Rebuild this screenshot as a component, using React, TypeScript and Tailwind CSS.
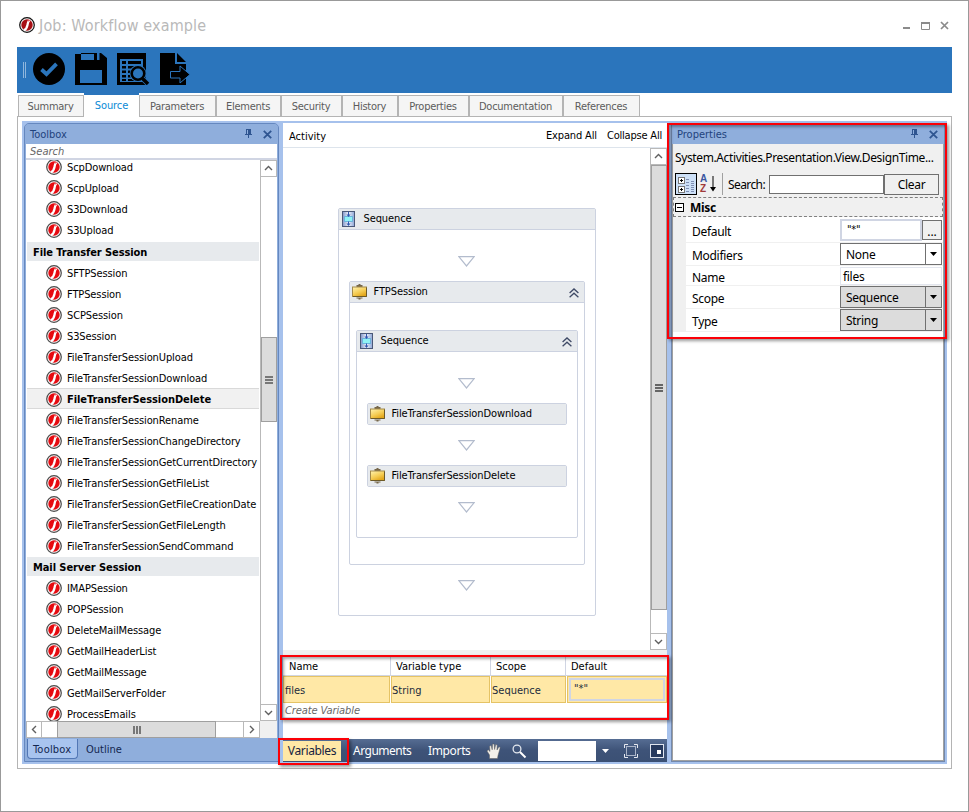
import type { ReactNode } from 'react';

type ToolRow = { label: string; kind?: 'group' | 'selected'; spaced?: boolean };

const toolRows: ToolRow[] = [
  { label: 'ScpDownload' },
  { label: 'ScpUpload' },
  { label: 'S3Download' },
  { label: 'S3Upload' },
  { label: 'File Transfer Session', kind: 'group', spaced: true },
  { label: 'SFTPSession' },
  { label: 'FTPSession' },
  { label: 'SCPSession' },
  { label: 'S3Session' },
  { label: 'FileTransferSessionUpload' },
  { label: 'FileTransferSessionDownload' },
  { label: 'FileTransferSessionDelete', kind: 'selected' },
  { label: 'FileTransferSessionRename' },
  { label: 'FileTransferSessionChangeDirectory' },
  { label: 'FileTransferSessionGetCurrentDirectory' },
  { label: 'FileTransferSessionGetFileList' },
  { label: 'FileTransferSessionGetFileCreationDate' },
  { label: 'FileTransferSessionGetFileLength' },
  { label: 'FileTransferSessionSendCommand' },
  { label: 'Mail Server Session', kind: 'group' },
  { label: 'IMAPSession' },
  { label: 'POPSession' },
  { label: 'DeleteMailMessage' },
  { label: 'GetMailHeaderList' },
  { label: 'GetMailMessage' },
  { label: 'GetMailServerFolder' },
  { label: 'ProcessEmails' },
];

const tabs = [
  { label: 'Summary', width: 'w-[66px]' },
  { label: 'Source', width: 'w-[55px]', active: true },
  { label: 'Parameters', width: 'w-[77px]' },
  { label: 'Elements', width: 'w-[65px]' },
  { label: 'Security', width: 'w-[61px]' },
  { label: 'History', width: 'w-[56px]' },
  { label: 'Properties', width: 'w-[71px]' },
  { label: 'Documentation', width: 'w-[94px]' },
  { label: 'References', width: 'w-[77px]' },
];

function Logo({ dark = false }: { dark?: boolean }) {
  return (
    <svg width="16" height="16" viewBox="0 0 16 16" className="shrink-0">
      <circle cx="8" cy="8" r="7.3" fill="#f4f4f4" stroke={dark ? '#111' : '#4a4a4a'} strokeWidth="1.2" />
      <circle cx="8" cy="8" r="5.7" fill={dark ? '#a80f14' : '#e60a10'} />
      <path d="M10.8 3.4 C8.6 4.2 9 5.8 8.5 8 C8 10.400 7.300 12.400 5 13.200" fill="none" stroke="#fff" strokeWidth="2.300" />
      <path d="M9 2.600 L11.200 2.900 L10.600 4.200 L8.800 4.400z" fill="#ec5a5e" />
    </svg>
  );
}

function PinIcon() {
  return (
    <svg width="7" height="10" viewBox="0 0 7 10" shapeRendering="crispEdges">
      <path d="M1 0h5v5h1v1H4v3H3V6H0V5h1z" fill="#2f5591" />
      <rect x="2" y="1" width="1" height="4" fill="#8faedc" />
    </svg>
  );
}

function CloseIcon({ color = '#2f5591' }: { color?: string }) {
  return (
    <svg width="9" height="9" viewBox="0 0 9 9">
      <path d="M0.8 0.8 L8.2 8.2 M8.2 0.8 L0.8 8.2" stroke={color} strokeWidth="1.8" />
    </svg>
  );
}

function Chevron({ dir }: { dir: 'up' | 'down' | 'left' | 'right' }) {
  const paths = {
    up: 'M1 6 L4.5 2.5 L8 6',
    down: 'M1 3 L4.5 6.5 L8 3',
    left: 'M6 1 L2.5 4.5 L6 8',
    right: 'M3 1 L6.5 4.5 L3 8',
  };
  return (
    <svg width="9" height="9" viewBox="0 0 9 9">
      <path d={paths[dir]} fill="none" stroke="#606060" strokeWidth="1.4" />
    </svg>
  );
}

function PanelHeader({ title }: { title: string }) {
  return (
    <div className="flex h-[20px] shrink-0 items-center bg-[#8faedc] pr-[6px] pl-[5px] text-[#1f437c]">
      <span className="flex-1 pt-px">{title}</span>
      <PinIcon />
      <span className="ml-[11px]">
        <CloseIcon />
      </span>
    </div>
  );
}

function SequenceIcon() {
  return (
    <svg width="13" height="16" viewBox="0 0 13 16">
      <defs>
        <linearGradient id="seq" x1="0" y1="0" x2="1" y2="0">
          <stop offset="0" stopColor="#7f93c6" />
          <stop offset="0.5" stopColor="#eef3fc" />
          <stop offset="1" stopColor="#8ba3d4" />
        </linearGradient>
      </defs>
      <rect x="0.5" y="0.5" width="12" height="15" fill="url(#seq)" stroke="#4a5878" />
      <rect x="2.500" y="5.500" width="8" height="5" fill="#8ff2f4" stroke="#6cb4dc" />
      <path d="M6.5 1v4M6.5 10.5v3" stroke="#2f55ad" />
      <path d="M4.500 3.500h4L6.500 6z M4.500 12.500h4L6.500 15z" fill="#2f55ad" />
    </svg>
  );
}

function ActivityIcon() {
  return (
    <svg width="16" height="16" viewBox="0 0 16 16">
      <defs>
        <linearGradient id="act" x1="0" y1="0" x2="0.6" y2="1">
          <stop offset="0" stopColor="#fff3b0" />
          <stop offset="0.6" stopColor="#f5cd55" />
          <stop offset="1" stopColor="#e3a71c" />
        </linearGradient>
      </defs>
      <path d="M6.500 0h2v1h2v2h-6V1h2z M4.500 13.500h6v1h-2v1h-2v-1h-2z" fill="#75664a" />
      <rect x="0.500" y="3" width="14" height="9.500" fill="url(#act)" stroke="#a3894a" />
      <path d="M1 12.500h13.500V3.500" fill="none" stroke="#6d5a28" />
    </svg>
  );
}

function FlowArrow() {
  return (
    <svg width="17" height="11" viewBox="0 0 17 11" className="block">
      <path d="M0.800 0.600h15.400L8.500 10z" fill="#fff" stroke="#b3bccd" strokeWidth="1.200" />
    </svg>
  );
}

function ActivityHeader({ icon, label, collapsible = false }: { icon: ReactNode; label: string; collapsible?: boolean }) {
  return (
    <div className="flex h-[20px] items-center bg-[#e7eaed] pr-[5px] tracking-[-0.1px]">
      {icon}
      <span className="flex-1 pb-px">{label}</span>
      {collapsible && (
        <svg width="10" height="10" viewBox="0 0 10 10" className="mt-[2px]">
          <path d="M0.600 5 L5 1 L9.400 5 M0.600 9.200 L5 5.200 L9.400 9.200" fill="none" stroke="#3f4a66" strokeWidth="1.300" />
        </svg>
      )}
    </div>
  );
}

function ActivityCard({ label }: { label: string }) {
  return (
    <div className="h-[22px] w-[200px] rounded-[2px] border border-[#ccd2e0]">
      <ActivityHeader icon={<span className="mr-[6px] ml-[2px]"><ActivityIcon /></span>} label={label} />
    </div>
  );
}

function TitleBar() {
  return (
    <div className="flex h-[46px] shrink-0 items-start pl-[18px]">
      <span className="mt-4">
        <Logo dark />
      </span>
      <h1 className="mt-[15px] ml-1 flex-1 text-[16px] leading-[20px] tracking-[0.15px] text-[#b9b9b9]">Job: Workflow example</h1>
      <svg width="46" height="10" viewBox="0 0 46 10" className="mt-[20px] mr-[19px]">
        <rect x="0" y="6" width="7" height="2" fill="#8b8b8b" />
        <path d="M19 1h8v7h-8z" transform="translate(-0.500 0.500)" fill="none" stroke="#8b8b8b" />
        <rect x="18" y="1" width="9" height="2" fill="#8b8b8b" />
        <path d="M38 1 L45 8 M45 1 L38 8" stroke="#8b8b8b" strokeWidth="1.700" />
      </svg>
    </div>
  );
}

function Ribbon() {
  return (
    <div className="flex h-[46px] shrink-0 items-start bg-[#2b75bc] pt-[6px] pl-[6px]">
      <div className="mt-[9px] h-4 w-[3px] border-x border-[#8fb6dc]" />
      <svg width="32" height="32" viewBox="0 0 32 32" className="ml-[7px]">
        <circle cx="16" cy="16" r="16" />
        <path d="M8.500 16.500 L13.500 21 L23.500 10.800" fill="none" stroke="#2b75bc" strokeWidth="3.800" />
      </svg>
      <svg width="32" height="32" viewBox="0 0 32 32" className="ml-[10px]">
        <path d="M0 1h6v6h20V0l6 5v27H0z M5 17v13h22V17z" fillRule="evenodd" />
        <path d="M6 0h13v6H6z" fill="#2b75bc" />
        <path d="M6 0h13v1H6z M19 0h3v7h-3z" />
        <path d="M22 0h2.500v6H22z" fill="#2b75bc" />
        <path d="M24.500 0h1.500v7h-1.500z" />
      </svg>
      <svg width="33" height="32" viewBox="0 0 33 32" className="ml-[10px]">
        <path d="M0 0h29v32H0z" />
        <path d="M3 6h23v23H3z" fill="#2b75bc" />
        <path d="M5 8h4v3H5z M11 8h13v3H11z M5 13h4v2.500H5z M11 13h13v2.500H11z M5 17.500h4V20H5z M11 17.500h10V20H11z M5 22h4v2.500H5z M11 22h10v2.500H11z M5 26h4v2H5z M11 26h10v2H11z" />
        <circle cx="21" cy="20.500" r="8.400" fill="#2b75bc" />
        <circle cx="21" cy="20.500" r="6.300" fill="#2b75bc" stroke="#000" strokeWidth="2.600" />
        <path d="M25.500 25.500 L31 31" stroke="#2b75bc" strokeWidth="5" />
        <path d="M25 25 L31 31" stroke="#000" strokeWidth="3.500" />
      </svg>
      <svg width="31" height="32" viewBox="0 0 31 32" className="ml-[10px]">
        <path d="M0 0h15v11h11v21H0z M17 0l9 9h-9z" />
        <path d="M10.500 18.500h9.500v-5.500l10 8.500L20 30v-5h-9.500z" stroke="#2b75bc" strokeWidth="1" />
      </svg>
    </div>
  );
}

function TabStrip() {
  return (
    <div className="flex h-[23px] shrink-0 pl-px leading-[13px] tracking-[-0.25px]">
      {tabs.map((tab) =>
        tab.active ? (
          <div key={tab.label} className={`${tab.width} relative z-10 h-[24px] border-t-2 border-[#2b75bc] bg-white pt-1 text-center tracking-[-0.1px] text-[#0a8ad6]`}>
            {tab.label}
          </div>
        ) : (
          <div key={tab.label} className={`${tab.width} mt-[2px] border border-b-0 border-[#b4b4b4] bg-[#f5f5f5] pt-1 pr-px text-center text-[#5c5c5c]`}>
            {tab.label}
          </div>
        ),
      )}
      <div className="flex-1" />
    </div>
  );
}

function Toolbox() {
  return (
    <div className="flex w-[255px] shrink-0 flex-col overflow-hidden rounded-t-[5px] border border-[#6688bf] bg-[#8faedc]">
      <PanelHeader title="Toolbox" />
      <div className="mx-px h-[16px] border-b-2 border-[#d0d5e3] bg-white pl-1 leading-[15px] text-[#666] italic">Search</div>
      <div className="mx-px flex h-[561px] bg-white">
        <div className="flex-1 overflow-hidden pl-px">
          <div className="-mt-[4px] mr-px">
            {toolRows.map((row) =>
              row.kind === 'group' ? (
                <div key={row.label} className={row.spaced ? 'flex h-[22px] items-start pt-[2px]' : 'flex h-[21px] items-start pt-px'}>
                  <div className="h-[19px] flex-1 bg-[#e7eaed] pl-[6px] leading-[21px] font-bold tracking-[-0.08px]">{row.label}</div>
                </div>
              ) : (
                <div
                  key={row.label}
                  className={
                    row.kind === 'selected'
                      ? 'flex h-[21px] items-start border-y border-[#d9d9d9] bg-[#f1f1f1] pt-[2px] pl-[19px] font-bold tracking-[-0.06px]'
                      : 'flex h-[21px] items-start pt-[3px] pl-[19px] tracking-[-0.11px]'
                  }
                >
                  <Logo />
                  <span className="ml-[5px] leading-[17px] whitespace-nowrap">{row.label}</span>
                </div>
              ),
            )}
          </div>
        </div>
        <div className="flex w-[17px] flex-col border-l border-[#b9b9b9]">
          <div className="flex h-[17px] items-center justify-center border-y border-r border-[#b9b9b9]"><Chevron dir="up" /></div>
          <div className="h-[160px]" />
          <div className="flex h-[85px] items-center justify-center border border-[#9f9f9f] bg-[#dcdcdc]">
            <div className="flex h-2 w-2 flex-col justify-between border-y-2 border-[#777]"><div className="my-auto h-[2px] bg-[#777]" /></div>
          </div>
          <div className="flex-1" />
          <div className="flex h-[17px] items-center justify-center border-y border-r border-[#b9b9b9]"><Chevron dir="down" /></div>
        </div>
      </div>
      <div className="mx-px flex h-[17px] bg-white">
        <div className="flex w-[16px] items-center justify-center border border-[#b9b9b9]"><Chevron dir="left" /></div>
        <div className="w-[15px] border-y border-[#b9b9b9]" />
        <div className="flex w-[159px] items-center justify-center border border-[#9f9f9f] bg-[#dcdcdc]">
          <div className="flex h-2 w-2 justify-between border-x-2 border-[#777]"><div className="mx-auto w-[2px] bg-[#777]" /></div>
        </div>
        <div className="flex-1 border-y border-[#b9b9b9]" />
        <div className="flex w-[17px] items-center justify-center border border-[#b9b9b9]"><Chevron dir="right" /></div>
        <div className="w-[17px] bg-[#f0f0f0]" />
      </div>
      <div className="flex flex-1 items-start pt-px pl-[2px] text-[#12264f]">
        <div className="h-[20px] w-[51px] rounded-b-[4px] border border-t-0 border-[#5277b5] bg-[#a8c4ef] pl-[5px] leading-[21px] tracking-[0.2px]">Toolbox</div>
        <div className="ml-2 leading-[21px]">Outline</div>
      </div>
    </div>
  );
}

function Designer() {
  return (
    <div className="flex h-[502px] shrink-0">
      <div className="flex flex-1 justify-center bg-white pt-[60px]">
        <div className="h-[408px] w-[258px] rounded-[2px] border border-[#ccd2e0] bg-white">
          <ActivityHeader icon={<span className="mr-[9px] ml-[3px]"><SequenceIcon /></span>} label="Sequence" />
          <div className="flex flex-col items-center border-t border-[#ccd2e0] pt-[26px]">
            <FlowArrow />
            <div className="mt-[14px] h-[284px] w-[236px] rounded-[2px] border border-[#ccd2e0]">
              <ActivityHeader icon={<span className="mr-[6px] ml-[2px]"><ActivityIcon /></span>} label="FTPSession" collapsible />
              <div className="flex flex-col items-center border-t border-[#ccd2e0] pt-[27px]">
                <div className="h-[208px] w-[222px] rounded-[2px] border border-[#ccd2e0]">
                  <ActivityHeader icon={<span className="mr-2 ml-[3px]"><SequenceIcon /></span>} label="Sequence" collapsible />
                  <div className="flex flex-col items-center border-t border-[#ccd2e0] pt-[26px]">
                    <FlowArrow />
                    <div className="h-[14px]" />
                    <ActivityCard label="FileTransferSessionDownload" />
                    <div className="h-[15px]" />
                    <FlowArrow />
                    <div className="h-[14px]" />
                    <ActivityCard label="FileTransferSessionDelete" />
                    <div className="h-[15px]" />
                    <FlowArrow />
                  </div>
                </div>
              </div>
            </div>
            <div className="h-[15px]" />
            <FlowArrow />
          </div>
        </div>
      </div>
      <div className="flex w-[17px] flex-col border-l border-[#b9b9b9] bg-white">
        <div className="flex h-[17px] items-center justify-center border-y border-r border-[#b9b9b9]"><Chevron dir="up" /></div>
        <div className="flex h-[445px] items-center justify-center border border-[#9f9f9f] bg-[#dcdcdc]">
          <div className="flex h-2 w-2 flex-col border-y-2 border-[#666]"><div className="my-auto h-[2px] bg-[#666]" /></div>
        </div>
        <div className="flex-1" />
        <div className="flex h-[17px] items-center justify-center border-y border-r border-[#b9b9b9]"><Chevron dir="down" /></div>
      </div>
    </div>
  );
}

function VariablesTable() {
  return (
    <div className="h-[83px] shrink-0 border-t border-[#d0d5e3] bg-white">
      <div className="flex h-[19px] border-b border-[#d0d5e3] leading-[19px]">
        <div className="w-[108px] border-r border-[#d0d5e3] pl-[6px]">Name</div>
        <div className="w-[100px] border-r border-[#d0d5e3] pl-[5px]">Variable type</div>
        <div className="w-[75px] border-r border-[#d0d5e3] pl-[5px]">Scope</div>
        <div className="flex-1 pl-[5px]">Default</div>
      </div>
      <div className="flex h-[27px] leading-[27px] text-[#222b3c]">
        <div className="w-[107px] border border-[#e5c365] bg-[#ffe8a6] pl-px">files</div>
        <div className="ml-px w-[99px] border border-[#e5c365] bg-[#ffe8a6]">String</div>
        <div className="ml-px w-[75px] border border-[#e5c365] bg-[#ffe8a6]">Sequence</div>
        <div className="ml-px flex-1 border border-[#e5c365] bg-[#ffe8a6]">
          <div className="m-px h-[23px] border-2 border-[#d0d5e3] pl-[3px] leading-[17px]">"*"</div>
        </div>
      </div>
      <div className="h-[15px] border-b border-[#d0d5e3] pl-[2px] leading-[15px] tracking-[-0.1px] text-[#666] italic">Create Variable</div>
    </div>
  );
}

function DesignerToolbar() {
  return (
    <div className="flex h-[23px] shrink-0 items-center bg-linear-to-b from-[#566d93] via-[#3e5378] to-[#3b5074] pt-px font-['Noto_Sans',sans-serif] text-[12px] text-white">
      <div className="h-[20px] w-[58px] bg-[#ffe8a6] text-center leading-[20px] tracking-[-0.35px] text-[#16233f]">Variables</div>
      <div className="ml-3 w-[75px] tracking-[-0.5px]">Arguments</div>
      <div className="w-[58px] tracking-[-0.35px]">Imports</div>
      <svg width="16" height="16" viewBox="0 0 16 16">
        <path d="M3.500 15.500 L3.500 12 L1 8 L2.200 6.800 L4 8.500 L3.600 3 L5.100 2.500 L6.200 6.800 L6.600 1 L8.100 0.900 L8.600 6.500 L9.700 1.600 L11.200 1.900 L11 7 L13 3.800 L14.200 4.500 L13 9 L12 12.500 L11.500 15.500z" fill="#f3f0ea" stroke="#5e5e5e" strokeWidth="0.500" />
      </svg>
      <svg width="15" height="15" viewBox="0 0 15 15" className="ml-[10px]">
        <circle cx="5" cy="5" r="3.900" fill="none" stroke="#e4e8ef" strokeWidth="1.300" />
        <path d="M8 8 L13.500 13.500" stroke="#fff" strokeWidth="2" />
      </svg>
      <div className="mb-px ml-[11px] h-[20px] w-[58px] bg-white" />
      <svg width="7" height="4" viewBox="0 0 7 4" className="mb-px ml-[6px]"><path d="M0 0h7L3.500 4z" fill="#fff" /></svg>
      <svg width="14" height="14" viewBox="0 0 14 14" className="mb-px ml-[15px]" fill="none" stroke="#e6e9f0">
        <path d="M0.500 4V0.500H4 M10 0.500h3.500V4 M13.500 10v3.500H10 M4 13.500H0.500V10" />
        <rect x="2.500" y="2.500" width="9" height="9" stroke="#aab4c8" />
      </svg>
      <svg width="14" height="14" viewBox="0 0 14 14" className="mb-px ml-[12px]">
        <rect x="0.500" y="0.500" width="13" height="13" fill="#26395d" stroke="#dfe4ee" />
        <rect x="7" y="6" width="4" height="4" fill="#fff" />
      </svg>
    </div>
  );
}

function Workspace() {
  return (
    <div className="relative ml-1 flex w-[384px] shrink-0 flex-col bg-white">
      <div className="flex h-[25px] shrink-0 items-center border-b border-[#dde4ec] pr-[5px] pl-[6px]">
        <span className="flex-1 pt-[3px]">Activity</span>
        <span className="pt-px tracking-[-0.15px]">Expand All</span>
        <span className="ml-[10px] pt-px tracking-[-0.2px]">Collapse All</span>
      </div>
      <Designer />
      <div className="h-[6px] shrink-0 bg-[#f0f0f0]" />
      <VariablesTable />
      <DesignerToolbar />
      {/* highlight frames over the variables grid and its toggle */}
      <div className="absolute top-[532px] -left-[3px] z-20 h-[65px] w-[389px] border-2 border-[#fb0007] shadow-[2px_2px_3px_rgba(0,0,0,0.4),inset_2px_2px_3px_rgba(0,0,0,0.35)]" />
      <div className="absolute top-[615px] -left-[5px] z-20 h-[27px] w-[71px] border-2 border-[#fb0007] shadow-[2px_2px_3px_rgba(0,0,0,0.4)]" />
    </div>
  );
}

function DropButton() {
  return (
    <div className="flex w-4 items-center justify-center border-l border-[#707070]">
      <svg width="7" height="4" viewBox="0 0 7 4"><path d="M0 0h7L3.500 4z" fill="#000" /></svg>
    </div>
  );
}

function PropertyRow({ label, height, children }: { label: string; height: string; children: ReactNode }) {
  return (
    <div className={`${height} flex border-b border-[#f0f0f0]`}>
      <div className="flex w-[154px] items-center pt-[4px] pl-[6px]">{label}</div>
      {children}
    </div>
  );
}

function PropertiesPanel() {
  return (
    <div className="relative ml-1 flex w-[274px] shrink-0 flex-col border border-[#7389ad] bg-white">
      <PanelHeader title="Properties" />
      <div className="flex flex-1 flex-col border-x border-b border-[#a0a0a0] font-['Noto_Sans',sans-serif] text-[12px] tracking-[-0.3px]">
        <div className="h-[53px] shrink-0 bg-[#f0f0f0]">
          <div className="h-[29px] pt-[5px] pl-[2px] leading-[17px] tracking-[-0.38px] whitespace-nowrap">System.Activities.Presentation.View.DesignTime...</div>
          <div className="flex items-start pl-[2px]">
            <div className="flex h-[22px] w-[22px] items-center justify-center border border-black bg-[#cde0f7]">
              <svg width="17" height="17" viewBox="0 0 17 17" shapeRendering="crispEdges">
                <path d="M0.500 1.500h6v6h-6z M0.500 10.500h6v6h-6z" fill="#fff" stroke="#777" />
                <path d="M2 4h3v1H2z M3 3h1v3H3z M2 13h3v1H2z M3 12h1v3H3z" fill="#000" />
                <path d="M8 3h3v1H8z M8 6h3v1H8z M8 9h3v1H8z M8 12h3v1H8z M8 15h3v1H8z M13 5h3v1h-3z M13 7h3v1h-3z M13 9h3v1h-3z M13 11h3v1h-3z M13 13h3v1h-3z M13 15h3v1h-3z" fill="#7f8fb4" />
              </svg>
            </div>
            <div className="ml-[3px] flex h-[22px] w-[17px] items-start">
              <div className="w-[8px] pt-px font-['Liberation_Sans',sans-serif] text-[10px] leading-[10px] font-bold tracking-normal">
                <div className="h-[10px] text-[#3b56a0]">A</div>
                <div className="h-[10px] text-[#a03a3a]">Z</div>
              </div>
              <svg width="6" height="16" viewBox="0 0 6 16" className="mt-[3px] ml-[2px]"><path d="M2.500 0h1v11h2.500L3 15.500 0 11h2.500z" fill="#000" /></svg>
            </div>
            <div className="ml-[5px] h-[22px] w-px bg-[#a0a0a0]" />
            <span className="ml-[5px] w-[41px] leading-[23px] tracking-[-0.6px]">Search:</span>
            <div className="mt-[2px] h-[19px] w-[115px] border border-[#707070] bg-white" />
            <div className="mt-px h-[21px] w-[55px] border border-[#707070] bg-[#f0f0f0] text-center leading-[20px]">Clear</div>
          </div>
        </div>
        <div className="flex h-[20px] shrink-0 items-center border border-dashed border-[#808080] bg-[#f0f0f0] pl-[1px]">
          <svg width="9" height="9" viewBox="0 0 9 9" shapeRendering="crispEdges">
            <rect x="0.500" y="0.500" width="8" height="8" fill="#fff" stroke="#000" />
            <path d="M2 4h5v1H2z" fill="#000" />
          </svg>
          <span className="mt-px ml-[6px] font-bold">Misc</span>
        </div>
        <div className="flex shrink-0 bg-white">
          <div className="w-[13px] bg-[#f0f0f0]" />
          <div className="flex-1">
            <PropertyRow label="Default" height="h-[26px]">
              <div className="mt-[2px] h-[22px] w-[82px] border-2 border-[#d0d5e3] pl-[5px] font-['DejaVu_Sans_Condensed',sans-serif] text-[11px] leading-[17px]">"*"</div>
              <div className="mt-[3px] h-[20px] w-[20px] border border-[#707070] bg-[#f0f0f0] text-center leading-[21px] tracking-normal">...</div>
            </PropertyRow>
            <PropertyRow label="Modifiers" height="h-[23px]">
              <div className="flex w-[102px] border border-[#707070] bg-white">
                <span className="flex-1 pl-[5px] leading-[22px]">None</span>
                <DropButton />
              </div>
            </PropertyRow>
            <PropertyRow label="Name" height="h-[20px]">
              <div className="mt-px w-[102px] border border-[#e3e6ee] bg-white pl-[2px] leading-[18px]">files</div>
            </PropertyRow>
            <PropertyRow label="Scope" height="h-[23px]">
              <div className="flex w-[102px] border border-[#707070] bg-[#dcdcdc]">
                <span className="flex-1 pl-[5px] leading-[22px]">Sequence</span>
                <DropButton />
              </div>
            </PropertyRow>
            <PropertyRow label="Type" height="h-[23px]">
              <div className="flex w-[102px] border border-[#707070] bg-[#dcdcdc]">
                <span className="flex-1 pl-[5px] leading-[22px]">String</span>
                <DropButton />
              </div>
            </PropertyRow>
          </div>
        </div>
      </div>
      <div className="absolute -top-px -left-[5px] z-20 h-[216px] w-[280px] border-2 border-[#fb0007] shadow-[2px_2px_3px_rgba(0,0,0,0.4),inset_2px_2px_3px_rgba(0,0,0,0.35)]" />
    </div>
  );
}

export default function App() {
  return (
    <div className="flex h-[812px] w-[969px] flex-col overflow-hidden border border-[#999] bg-white px-4 font-['DejaVu_Sans_Condensed','DejaVu_Sans',sans-serif] text-[11px] leading-[14px] text-black">
      <div className="-mx-4">
        <TitleBar />
      </div>
      <div className="flex flex-col">
        <Ribbon />
        <TabStrip />
        <div className="flex h-[653px] border border-[#b4b4b4] p-[4px]">
          <div className="flex h-[643px] w-full border-2 border-[#a6c1ec] bg-[#a6c1ec]">
            <Toolbox />
            <Workspace />
            <PropertiesPanel />
          </div>
        </div>
      </div>
    </div>
  );
}
